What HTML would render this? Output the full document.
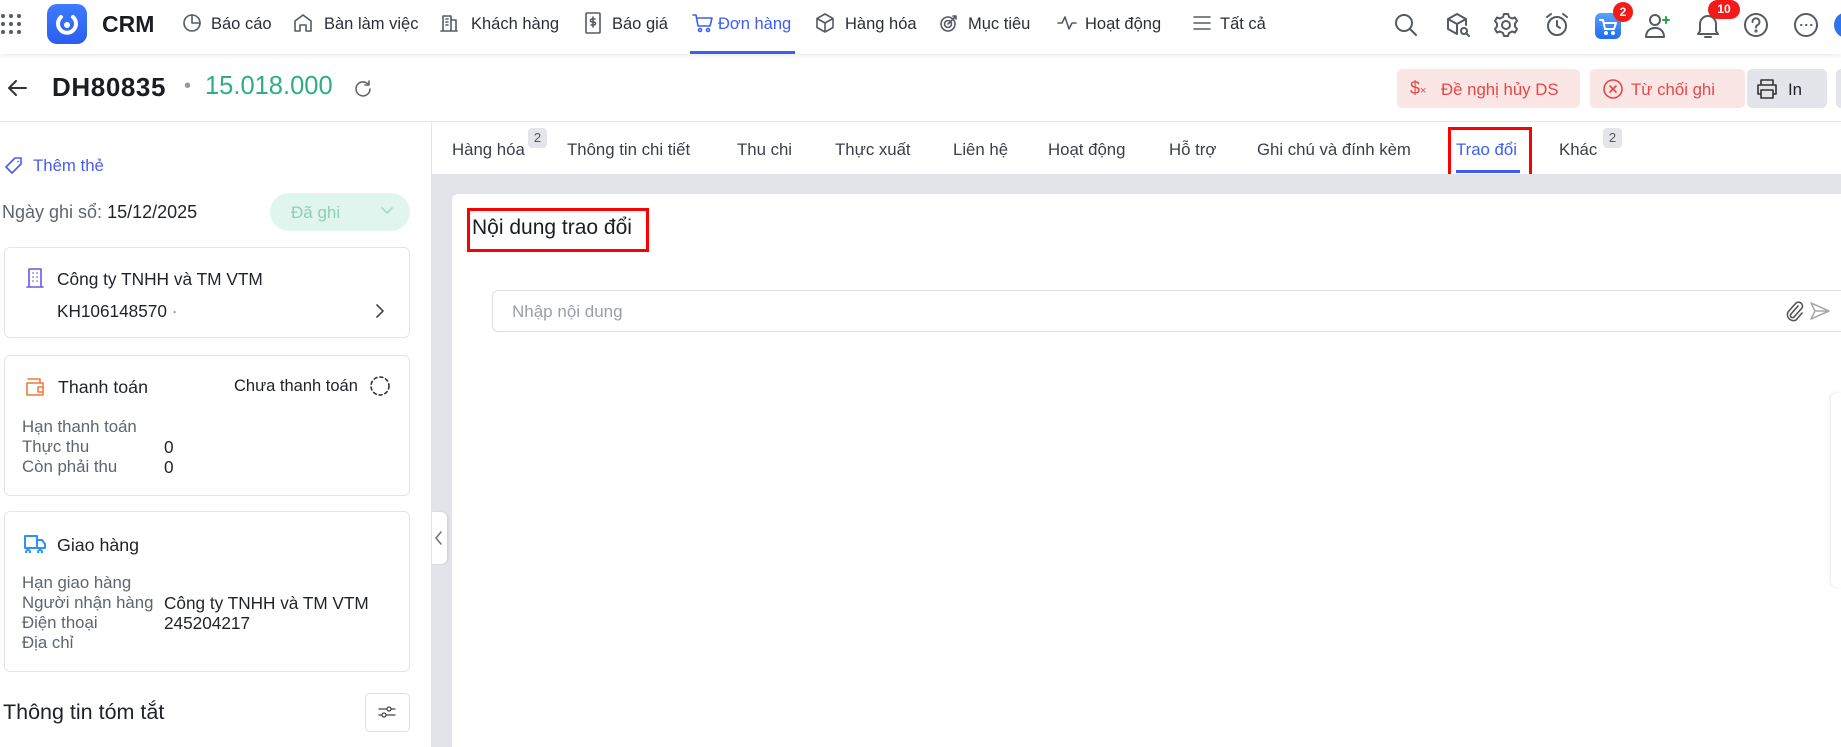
<!DOCTYPE html>
<html><head><meta charset="utf-8"><style>
*{box-sizing:border-box;margin:0;padding:0}
body{width:1841px;height:747px;overflow:hidden;background:#fff;font-family:"Liberation Sans",sans-serif;color:#1f2329;position:relative}
.a{position:absolute;white-space:nowrap}
svg{position:absolute;fill:none;stroke:#555a64;stroke-width:1.6;stroke-linecap:round;stroke-linejoin:round}
.nav{font-size:16.5px;color:#2b2f36;top:15px}
.tab{font-size:16.8px;color:#3a3f47;top:140px}
.badge{position:absolute;background:#e3e5ea;color:#555;font-size:13px;width:19px;height:20px;border-radius:4px;text-align:center;line-height:19px;top:128px}
.card{position:absolute;left:4px;width:406px;border:1px solid #e3e5ea;border-radius:6px;background:#fff}
.lbl{font-size:16.8px;color:#5e6570}
.val{font-size:17.2px;color:#1f2329}
.h{font-size:17.3px;color:#1f2329;font-weight:500}
</style></head><body>
<!-- header -->
<div class="a" style="left:0;top:0;width:1841px;height:54px;background:#fff;box-shadow:0 2px 4px rgba(0,0,0,.08)"></div>
<svg style="left:0;top:13px" width="24" height="24" viewBox="0 0 24 24"><g fill="#555a64" stroke="none"><circle cx="3" cy="3" r="2"/><circle cx="11" cy="3" r="2"/><circle cx="19" cy="3" r="2"/><circle cx="3" cy="11" r="2"/><circle cx="11" cy="11" r="2"/><circle cx="19" cy="11" r="2"/><circle cx="3" cy="19" r="2"/><circle cx="11" cy="19" r="2"/><circle cx="19" cy="19" r="2"/></g></svg>
<div class="a" style="left:47px;top:4px;width:40px;height:40px;border-radius:10px;background:linear-gradient(#3d7bff,#2b5df0)"></div>
<svg style="left:54px;top:11px;stroke:#fff;stroke-width:4" width="26" height="26" viewBox="0 0 26 26"><path d="M7 6a9 9 0 1 0 12 0"/><circle cx="13" cy="14" r="3" fill="#fff" stroke="none"/></svg>
<div class="a" style="left:102px;top:11px;font-size:23px;font-weight:700;color:#1a1d23">CRM</div>
<svg style="left:181px;top:12px" width="22" height="22" viewBox="0 0 22 22"><circle cx="11" cy="11" r="8"/><path d="M11 3v8h8"/></svg><div class="a nav" style="left:211px">Báo cáo</div>
<svg style="left:292px;top:12px" width="22" height="22" viewBox="0 0 22 22"><path d="M3 19V9l8-6 8 6v10h-5v-6h-6v6z"/></svg><div class="a nav" style="left:324px">Bàn làm việc</div>
<svg style="left:438px;top:12px" width="22" height="22" viewBox="0 0 22 22"><path d="M3 19h16M5 19V4h8v15M13 8h5v11M8 7h2M8 10h2M8 13h2"/></svg><div class="a nav" style="left:471px">Khách hàng</div>
<svg style="left:583px;top:11px" width="20" height="24" viewBox="0 0 20 24"><rect x="3" y="2" width="14" height="20" rx="1"/><path d="M12 8h-3a1.5 1.5 0 0 0 0 3h2a1.5 1.5 0 0 1 0 3H8M10 6v10"/></svg><div class="a nav" style="left:612px">Báo giá</div>
<svg style="left:691px;top:12px;stroke:#3d5ff0" width="24" height="22" viewBox="0 0 24 22"><path d="M2 3h3l2 11h12l2-8H6"/><circle cx="9" cy="18" r="1.5"/><circle cx="17" cy="18" r="1.5"/></svg><div class="a nav" style="left:718px;color:#3d5ff0">Đơn hàng</div>
<div class="a" style="left:690px;top:51px;width:105px;height:3px;background:#3d5ff0"></div>
<svg style="left:814px;top:12px" width="22" height="22" viewBox="0 0 22 22"><path d="M11 2l8 4.5v9L11 20l-8-4.5v-9zM3 6.5L11 11l8-4.5M11 11v9"/></svg><div class="a nav" style="left:845px">Hàng hóa</div>
<svg style="left:938px;top:12px" width="22" height="22" viewBox="0 0 22 22"><circle cx="10" cy="12" r="7"/><circle cx="10" cy="12" r="3.5"/><path d="M10 12l8-8M15 4h3v3"/></svg><div class="a nav" style="left:968px">Mục tiêu</div>
<svg style="left:1056px;top:12px" width="22" height="22" viewBox="0 0 22 22"><path d="M2 11h4l3-6 4 12 3-6h4"/></svg><div class="a nav" style="left:1085px">Hoạt động</div>
<svg style="left:1191px;top:12px" width="22" height="22" viewBox="0 0 22 22"><path d="M3 5h16M3 11h16M3 17h16"/></svg><div class="a nav" style="left:1220px">Tất cả</div>
<!-- right icons -->
<svg style="left:1392px;top:11px;stroke-width:2" width="28" height="28" viewBox="0 0 28 28"><circle cx="12" cy="12" r="8"/><path d="M18 18l6 6"/></svg>
<svg style="left:1444px;top:11px;stroke-width:2" width="28" height="28" viewBox="0 0 28 28"><path d="M13 3l9 5v6M13 3L4 8v10l9 5M4 8l9 5 9-5M13 13v10"/><circle cx="20" cy="20" r="3"/><path d="M22 22l3 3"/></svg>
<svg style="left:1492px;top:11px;stroke-width:2" width="28" height="28" viewBox="0 0 28 28"><circle cx="14" cy="14" r="4"/><path d="M12 3h4l1 3 3 1.5 3-1 2 3.5-2 2.5v3l2 2.5-2 3.5-3-1-3 1.5-1 3h-4l-1-3-3-1.5-3 1-2-3.5 2-2.5v-3l-2-2.5 2-3.5 3 1 3-1.5z"/></svg>
<svg style="left:1543px;top:11px;stroke-width:2" width="28" height="28" viewBox="0 0 28 28"><circle cx="14" cy="15" r="9"/><path d="M14 10v5l3 2M4 6l4-3M24 6l-4-3"/></svg>
<div class="a" style="left:1595px;top:13px;width:26px;height:26px;border-radius:6px;background:linear-gradient(#5aa0ff,#1f6ef0)"></div>
<svg style="left:1598px;top:17px;stroke:#fff;stroke-width:2" width="20" height="20" viewBox="0 0 20 20"><path d="M2 3h3l2 9h9l2-6H6"/><circle cx="8" cy="16" r="1"/><circle cx="15" cy="16" r="1"/></svg>
<div class="a" style="left:1613px;top:2px;width:20px;height:20px;border-radius:10px;background:#f31a1a;color:#fff;font-size:12px;font-weight:700;text-align:center;line-height:20px">2</div>
<svg style="left:1643px;top:11px;stroke-width:2" width="30" height="30" viewBox="0 0 30 30"><circle cx="12" cy="9" r="5"/><path d="M3 26c0-6 4-9 9-9s9 3 9 9z"/><path d="M23 6v6M20 9h6" stroke="#22a83a"/></svg>
<svg style="left:1694px;top:11px;stroke-width:2" width="28" height="30" viewBox="0 0 28 30"><path d="M6 20V13a8 8 0 0 1 16 0v7l2 3H4zM11 26h6"/></svg>
<div class="a" style="left:1708px;top:0;width:32px;height:19px;border-radius:10px;background:#f31a1a;color:#fff;font-size:12px;font-weight:700;text-align:center;line-height:19px">10</div>
<svg style="left:1742px;top:11px;stroke-width:2" width="28" height="28" viewBox="0 0 28 28"><circle cx="14" cy="14" r="11"/><path d="M10.5 11a3.5 3.5 0 1 1 5 3c-1.2.6-1.5 1.3-1.5 2.5"/><circle cx="14" cy="20" r=".6"/></svg>
<svg style="left:1792px;top:11px;stroke-width:2" width="28" height="28" viewBox="0 0 28 28"><circle cx="14" cy="14" r="11"/><path d="M9 14h.5M14 14h.5M19 14h.5"/></svg>
<div class="a" style="left:1834px;top:12px;width:26px;height:26px;border-radius:13px;background:#2f74e8"></div>
<!-- title row -->
<svg style="left:6px;top:78px;stroke:#333;stroke-width:2" width="22" height="20" viewBox="0 0 22 20"><path d="M20 10H3M10 3l-7 7 7 7"/></svg>
<div class="a" style="left:52px;top:72px;font-size:26px;font-weight:600;color:#1a1d23;letter-spacing:.6px">DH80835</div>
<div class="a" style="left:184px;top:75px;font-size:20px;color:#999">•</div>
<div class="a" style="left:205px;top:72px;font-size:25.5px;font-weight:500;color:#2fae83">15.018.000</div>
<svg style="left:352px;top:78px;stroke:#666" width="22" height="22" viewBox="0 0 22 22"><path d="M18 11a7 7 0 1 1-2-5M17 3v4h-4"/></svg>
<div class="a" style="left:1397px;top:69px;width:183px;height:39px;border-radius:5px;background:#fbe6e6"></div>
<div class="a" style="left:1410px;top:78px;font-size:18px;color:#e84646">$<span style="font-size:11px">×</span></div>
<div class="a" style="left:1441px;top:80px;font-size:16.8px;color:#e84646">Đề nghị hủy DS</div>
<div class="a" style="left:1590px;top:69px;width:155px;height:39px;border-radius:5px;background:#fbe6e6"></div>
<svg style="left:1602px;top:78px;stroke:#e84646" width="22" height="22" viewBox="0 0 22 22"><circle cx="11" cy="11" r="9"/><path d="M8 8l6 6M14 8l-6 6"/></svg>
<div class="a" style="left:1631px;top:80px;font-size:16.8px;color:#e84646">Từ chối ghi</div>
<div class="a" style="left:1747px;top:69px;width:80px;height:39px;border-radius:5px;background:#e3e5ea"></div>
<svg style="left:1755px;top:78px;stroke:#333" width="24" height="22" viewBox="0 0 24 22"><path d="M6 7V2h12v5M6 16H3V7h18v9h-3M6 12h12v8H6z"/></svg>
<div class="a" style="left:1788px;top:80px;font-size:16.8px;color:#1f2329">In</div>
<div class="a" style="left:1836px;top:69px;width:10px;height:39px;border-radius:5px;background:#e3e5ea"></div>
<div class="a" style="left:0;top:121px;width:1841px;height:1px;background:#e3e5ea"></div>
<!-- left panel -->
<div class="a" style="left:431px;top:122px;width:1px;height:625px;background:#e3e5ea"></div>
<svg style="left:3px;top:155px;stroke:#4a5cf0" width="22" height="22" viewBox="0 0 22 22"><path d="M12 3h6v6l-9 9-6-6zM15 6.5h.2"/></svg>
<div class="a" style="left:33px;top:156px;font-size:16.8px;color:#4a5cf0">Thêm thẻ</div>
<div class="a" style="left:2px;top:202px;font-size:18px;color:#5e6570">Ngày ghi sổ: <span style="color:#1f2329;font-weight:500">15/12/2025</span></div>
<div class="a" style="left:270px;top:193px;width:140px;height:38px;border-radius:19px;background:#dff5ee"></div>
<div class="a" style="left:291px;top:203px;font-size:17px;color:#8fcfb5;font-weight:500">Đã ghi</div>
<svg style="left:380px;top:206px;stroke:#a8dcc7" width="14" height="10" viewBox="0 0 14 10"><path d="M2 2l5 5 5-5"/></svg>
<div class="card" style="top:247px;height:91px"></div>
<svg style="left:24px;top:267px;stroke:#6a58e8" width="22" height="22" viewBox="0 0 22 22"><path d="M3 20h16M5 20V2h12v18M9 6h.1M13 6h.1M9 10h.1M13 10h.1M9 14h.1M13 14h.1"/></svg>
<div class="a h" style="left:57px;top:269px">Công ty TNHH và TM VTM</div>
<div class="a val" style="left:57px;top:301px">KH106148570 <span style="color:#888">·</span></div>
<svg style="left:374px;top:303px;stroke:#444" width="12" height="16" viewBox="0 0 12 16"><path d="M3 2l6 6-6 6"/></svg>
<div class="card" style="top:355px;height:141px"></div>
<svg style="left:24px;top:376px;stroke:#f07a3a" width="22" height="22" viewBox="0 0 22 22"><path d="M4 3h12v4M3 7h16v12H3zM14 11h5v5h-5z"/></svg>
<div class="a h" style="left:58px;top:377px;font-size:17.8px">Thanh toán</div>
<div class="a val" style="left:234px;top:377px;font-size:16.5px">Chưa thanh toán</div>
<svg style="left:369px;top:375px;stroke:#333;stroke-dasharray:3 3" width="22" height="22" viewBox="0 0 22 22"><circle cx="11" cy="11" r="9"/></svg>
<div class="a lbl" style="left:22px;top:417px">Hạn thanh toán</div>
<div class="a lbl" style="left:22px;top:437px">Thực thu</div><div class="a val" style="left:164px;top:437px">0</div>
<div class="a lbl" style="left:22px;top:457px">Còn phải thu</div><div class="a val" style="left:164px;top:457px">0</div>
<div class="card" style="top:511px;height:161px"></div>
<svg style="left:23px;top:533px;stroke:#2e93f0;stroke-width:2" width="24" height="20" viewBox="0 0 24 20"><path d="M2 3h12v12H2zM14 7h5l3 4v4h-8M5 17a2 2 0 1 0 .1 0M17 17a2 2 0 1 0 .1 0"/></svg>
<div class="a h" style="left:57px;top:535px;font-size:17.8px">Giao hàng</div>
<div class="a lbl" style="left:22px;top:573px">Hạn giao hàng</div>
<div class="a lbl" style="left:22px;top:593px">Người nhận hàng</div><div class="a val" style="left:164px;top:593px">Công ty TNHH và TM VTM</div>
<div class="a lbl" style="left:22px;top:613px">Điện thoại</div><div class="a val" style="left:164px;top:613px">245204217</div>
<div class="a lbl" style="left:22px;top:633px">Địa chỉ</div>
<div class="a" style="left:3px;top:700px;font-size:21.5px;color:#1f2329">Thông tin tóm tắt</div>
<div class="a" style="left:365px;top:693px;width:45px;height:39px;border:1px solid #dcdfe4;border-radius:5px"></div>
<svg style="left:377px;top:703px;stroke:#444;stroke-width:1.3" width="20" height="18" viewBox="0 0 20 18"><path d="M2 6h16M2 12h16"/><circle cx="12" cy="6" r="2" fill="#fff"/><circle cx="7" cy="12" r="2" fill="#fff"/></svg>
<!-- tabs -->
<div class="a tab" style="left:452px">Hàng hóa</div><div class="badge" style="left:528px">2</div>
<div class="a tab" style="left:567px">Thông tin chi tiết</div>
<div class="a tab" style="left:737px">Thu chi</div>
<div class="a tab" style="left:835px">Thực xuất</div>
<div class="a tab" style="left:953px">Liên hệ</div>
<div class="a tab" style="left:1048px">Hoạt động</div>
<div class="a tab" style="left:1169px">Hỗ trợ</div>
<div class="a tab" style="left:1257px">Ghi chú và đính kèm</div>
<div class="a tab" style="left:1456px;color:#3d5ff0">Trao đổi</div>
<div class="a" style="left:1456px;top:170px;width:64px;height:3px;background:#3d5ff0"></div>
<div class="a" style="left:1448px;top:127px;width:84px;height:54px;border:3px solid #f00"></div>
<div class="a tab" style="left:1559px">Khác</div><div class="badge" style="left:1603px">2</div>
<!-- content -->
<div class="a" style="left:432px;top:174px;width:1409px;height:573px;background:#e2e4e9"></div>
<div class="a" style="left:432px;top:512px;width:15px;height:52px;background:#fff;border-radius:0 6px 6px 0;box-shadow:1px 0 2px rgba(0,0,0,.1)"></div>
<svg style="left:434px;top:530px;stroke:#777" width="10" height="16" viewBox="0 0 10 16"><path d="M7 2L2 8l5 6"/></svg>
<div class="a" style="left:452px;top:194px;width:1389px;height:553px;background:#fff;border-radius:6px 0 0 0"></div>
<div class="a" style="left:472px;top:216px;font-size:21px;font-weight:500;color:#1a1d23">Nội dung trao đổi</div>
<div class="a" style="left:467px;top:208px;width:182px;height:44px;border:3px solid #f00"></div>
<div class="a" style="left:492px;top:290px;width:1360px;height:42px;border:1px solid #dcdfe4;border-radius:6px"></div>
<div class="a" style="left:512px;top:302px;font-size:17px;color:#9aa0aa">Nhập nội dung</div>
<svg style="left:1784px;top:300px;stroke:#555" width="20" height="22" viewBox="0 0 20 22"><path d="M14 6l-7 8a2 2 0 0 0 3 3l8-9a4 4 0 0 0-6-5l-8 9a6 6 0 0 0 8 8l6-7"/></svg>
<svg style="left:1809px;top:301px;stroke:#aaa" width="22" height="20" viewBox="0 0 22 20"><path d="M2 2l18 8-18 8 4-8zM6 10h14"/></svg>
<div class="a" style="left:1831px;top:393px;width:10px;height:194px;background:#fff;border-radius:6px 0 0 6px;box-shadow:-1px 0 3px rgba(0,0,0,.1)"></div>
</body></html>
